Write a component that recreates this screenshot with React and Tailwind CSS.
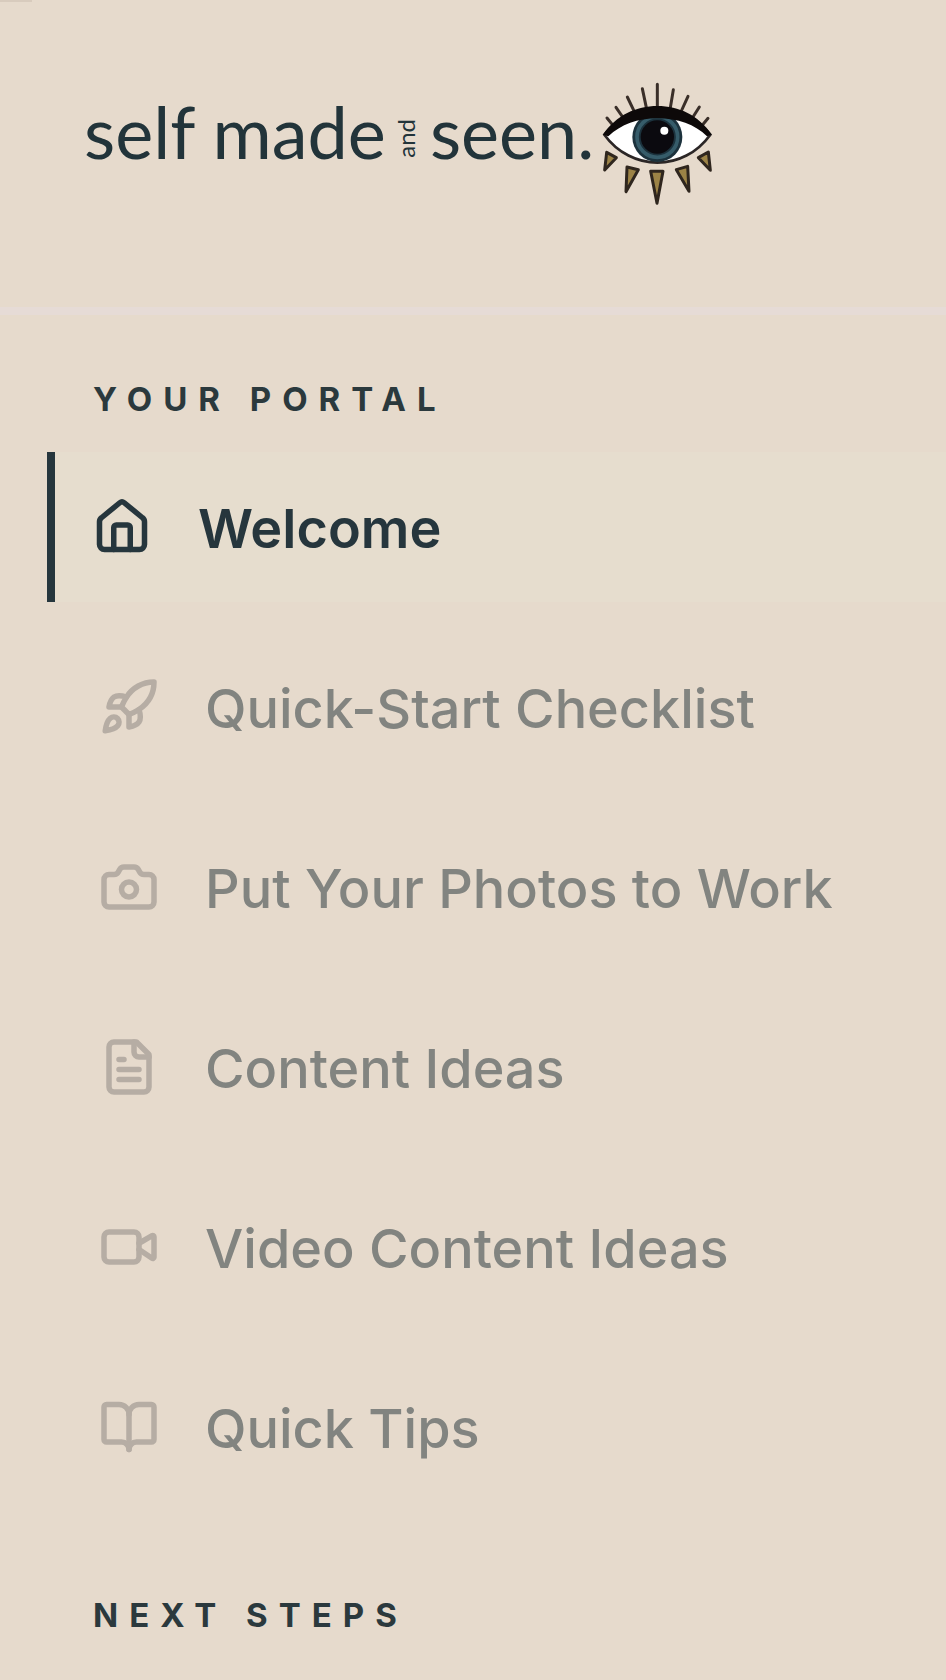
import React, { useState } from 'react';
import { Rocket, Camera, Video, BookOpen } from 'lucide-react';

function HomeIcon({ className, strokeWidth }) {
  return (
    <svg viewBox="0 0 24 24" fill="none" stroke="currentColor" strokeWidth={strokeWidth} strokeLinecap="round" strokeLinejoin="round" className={className} aria-hidden="true">
      <path d="M15.3 21v-8.8a1 1 0 0 0-1-1H9.7a1 1 0 0 0-1 1V21" />
      <path d="M3 9.9a2 2 0 0 1 .8-1.6l7.3-6a1.4 1.4 0 0 1 1.8 0l7.3 6a2 2 0 0 1 .8 1.6V19a2 2 0 0 1-2 2H5a2 2 0 0 1-2-2z" />
    </svg>
  );
}

function FileIcon({ className, strokeWidth }) {
  return (
    <svg viewBox="0 0 24 24" fill="none" stroke="currentColor" strokeWidth={strokeWidth} strokeLinecap="round" strokeLinejoin="round" className={className} aria-hidden="true">
      <path d="M15 2H6a2 2 0 0 0-2 2v16a2 2 0 0 0 2 2h12a2 2 0 0 0 2-2V7z" />
      <path d="M14 2v4a2 2 0 0 0 2 2h4" />
      <path d="M10 9H8M16 13H8M16 17H8" />
    </svg>
  );
}

function EyeLogo({ className }) {
  return (
    <svg viewBox="33 25 330 375" className={className} aria-hidden="true">
      {/* Lashes */}
      <path
        d="M199 32V104M154 45L166 102M247 48L238 102M109 70L130 114M291 68L271 112M75 101L97 133M325 100L306 130M48 133L66 155M351 134L335 153"
        fill="none" stroke="#3a2f29" strokeWidth="9" strokeLinecap="round"
      />
      {/* Eye */}
      <path d="M40 183C80 238 140 267 199 267C260 267 318 238 358 183C318 130 262 108 199 108C138 108 82 130 40 183Z" fill="#ffffff" stroke="#2b2626" strokeWidth="8" />
      <circle cx="199" cy="190" r="75" fill="#1c323d" />
      <circle cx="199" cy="190" r="61" fill="none" stroke="#365c6a" strokeWidth="11" />
      <circle cx="199" cy="190" r="50" fill="#0b0a0f" />
      <circle cx="220" cy="171" r="12" fill="#ffffff" />
      <path d="M36 183C76 124 136 97 199 97C264 97 322 124 362 183L348 188C312 152 260 134 199 134C140 134 90 152 52 188Z" fill="#0d0909" />
      {/* Drops */}
      <path d="M47 236L76 252L41 289ZM108 280L142 288L105 354ZM179 293H216L198 389ZM256 288L290 278L294 353ZM322 252L352 235L358 290Z" fill="#9c8346" stroke="#2f261e" strokeWidth="9" strokeLinejoin="round" />
    </svg>
  );
}

const portalItems = [
  { id: 'welcome', label: 'Welcome', icon: HomeIcon },
  { id: 'quick-start', label: 'Quick-Start Checklist', icon: Rocket },
  { id: 'photos', label: 'Put Your Photos to Work', icon: Camera },
  { id: 'content', label: 'Content Ideas', icon: FileIcon },
  { id: 'video', label: 'Video Content Ideas', icon: Video },
  { id: 'tips', label: 'Quick Tips', icon: BookOpen },
];

function NavItem({ item, active, onSelect }) {
  const Icon = item.icon;
  return (
    <a
      href={`#${item.id}`}
      onClick={() => onSelect(item.id)}
      aria-current={active ? 'page' : undefined}
      className={`flex h-[150px] items-center gap-[46px] whitespace-nowrap text-[54px] leading-[64px] ${
        active
          ? 'border-l-8 border-[#26363d] bg-[#e6ddce] pl-[37px] font-semibold text-[#26363d]'
          : 'pl-[52px] font-medium text-[#828480]'
      }`}
    >
      <Icon strokeWidth={2.2} className={`size-[60px] shrink-0 ${active ? '' : 'text-[#b6ada4]'}`} />
      <span className="pt-1">{item.label}</span>
    </a>
  );
}

function SectionTitle({ children }) {
  return (
    <h2 className="pl-[46px] text-[33px] font-bold uppercase leading-[48px] tracking-[11px] text-[#2b393d]">
      {children}
    </h2>
  );
}

export default function App() {
  const [current, setCurrent] = useState('welcome');

  return (
    <aside className="min-h-screen overflow-hidden bg-[#e6dacc] font-['Inter',sans-serif]">
      {/* Logo */}
      <header className="h-[315px] border-b-8 border-[#e6dbd6]">
        <div className="h-0.5 w-8 bg-[#d8cbbd]" />
        <a href="#welcome" className="flex items-center pl-[84px] pt-20 font-['Lato',sans-serif] text-[72px] leading-[96px] text-[#22343a]">
          <span className="pb-7">self made</span>
          <span className="ml-2 rotate-180 pt-3 text-2xl leading-6 [writing-mode:vertical-rl]">and</span>
          <span className="ml-3 pb-7">seen.</span>
          <EyeLogo className="ml-2 h-[125px] w-[110px] shrink-0" />
        </a>
      </header>

      {/* Nav */}
      <nav className="pb-10 pl-[47px] pt-[60px]">
        <SectionTitle>Your Portal</SectionTitle>
        <div className="mb-[89px] mt-[29px] flex flex-col gap-[30px]">
          {portalItems.map(item => (
            <NavItem key={item.id} item={item} active={item.id === current} onSelect={setCurrent} />
          ))}
        </div>
        <SectionTitle>Next Steps</SectionTitle>
      </nav>
    </aside>
  );
}
